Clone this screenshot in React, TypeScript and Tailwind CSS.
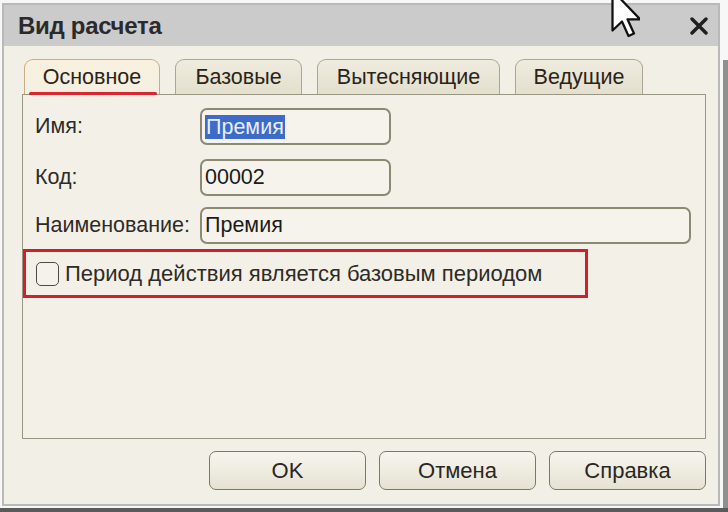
import React from "react"

const tabs = [
  { label: "Основное", w: "w-[136px]", active: true },
  { label: "Базовые", w: "w-[127px]" },
  { label: "Вытесняющие", w: "w-[183px]" },
  { label: "Ведущие", w: "w-[128px]" },
]

function Field({ label, value, wide, selected }: { label: string; value: string; wide?: boolean; selected?: boolean }) {
  return (
    <div className="flex items-center">
      <span className="w-[165px] shrink-0 text-[21.5px] text-[#2e2b26]">{label}</span>
      <div
        className={`${wide ? "w-[491px]" : "w-[191px]"} h-[37px] rounded-[7px] border-2 border-[#8d8872] bg-[#f5f3ec] flex items-center px-[3px] text-[21.5px] text-[#1d1b17]`}
      >
        {selected ? <span className="bg-[#3d6cc8] text-[#e8eefc] leading-[24px] px-[1px]">{value}</span> : value}
      </div>
    </div>
  )
}

export default function App() {
  return (
    <div className="relative w-[728px] h-[512px] overflow-hidden bg-[#f7f7f7] font-['Liberation_Sans',sans-serif]">
      <div className="ml-[2px] mt-[3px] w-[718px] h-[503px] border-2 border-[#b9b9b9] bg-[#f2f0e6] flex flex-col">
        {/* title bar */}
        <div className="h-[41px] shrink-0 bg-[#cbcbcb] flex items-center justify-between pl-[14px] pr-[10px]">
          <span className="text-[24px] font-bold text-[#2a2a2a] tracking-[-0.3px]">Вид расчета</span>
          <svg width="18" height="18" viewBox="0 0 18 18">
            <path d="M2 2 L16 16 M16 2 L2 16" stroke="#1f1f1f" strokeWidth="3.4" strokeLinecap="round" />
          </svg>
        </div>

        <div className="flex-1 pl-[18px] pt-[13px] flex flex-col">
          {/* tabs */}
          <div className="flex gap-[15px] pl-[2px] h-[35px]">
            {tabs.map((t) => (
              <div
                key={t.label}
                className={`${t.w} relative rounded-t-[9px] border border-b-0 flex items-center justify-center text-[21.5px] text-[#2a2418] ${
                  t.active
                    ? "border-[#c9ae85] bg-gradient-to-b from-[#f8f1de] to-[#f4efe2]"
                    : "border-[#aaa595] bg-gradient-to-b from-[#efebde] to-[#e4e0cf]"
                }`}
              >
                {t.label}
                {t.active && <div className="absolute left-[4px] right-[2px] bottom-[-1px] h-[3px] rounded-full bg-[#d8262c]" />}
              </div>
            ))}
          </div>

          {/* panel */}
          <div className="h-[345px] w-[684px] border-[1.5px] border-[#9b9682] bg-[#f3f1e7] pt-[13px] flex flex-col">
            <div className="pl-[12px] flex flex-col gap-[14px]">
              <Field label="Имя:" value="Премия" selected />
              <Field label="Код:" value="00002" />
            </div>
            <div className="pl-[12px] mt-[11px]">
              <Field label="Наименование:" value="Премия" wide />
            </div>
            <div className="mt-[5px] w-[565px] h-[49px] border-[3px] border-[#d0212a] flex items-center pl-[10px]">
              <div className="w-[23px] h-[24px] rounded-[5px] border-[1.5px] border-[#4a4a48] bg-[#f4f2ea]" />
              <span className="ml-[6px] text-[22px] text-[#2e2b26]">Период действия является базовым периодом</span>
            </div>
          </div>

          {/* buttons */}
          <div className="mt-[12px] w-[684px] flex justify-end gap-[13px]">
            {["OK", "Отмена", "Справка"].map((b) => (
              <div
                key={b}
                className="w-[157px] h-[39px] rounded-[7px] border-[1.5px] border-[#7d7862] bg-gradient-to-b from-[#f7f5ee] to-[#e6e2d3] flex items-center justify-center text-[22px] text-[#2a2722]"
              >
                {b}
              </div>
            ))}
          </div>
        </div>
      </div>

      {/* backdrop edges */}
      <div className="absolute right-0 top-[60px] bottom-0 w-[5px] bg-[#8f8f8f]" />
      <div className="absolute left-0 right-0 bottom-0 h-[4px] bg-[#5b5b5b]" />

      {/* mouse pointer */}
      <svg className="absolute left-[610px] top-[-12px]" width="30" height="50" viewBox="0 0 12 20">
        <path d="M1 1 L1 17 L4.8 13.4 L7.4 19.2 L9.6 18.2 L7 12.5 L12 12.5 Z" fill="#fff" stroke="#111" strokeWidth="0.9" strokeLinejoin="round" />
      </svg>
    </div>
  )
}
